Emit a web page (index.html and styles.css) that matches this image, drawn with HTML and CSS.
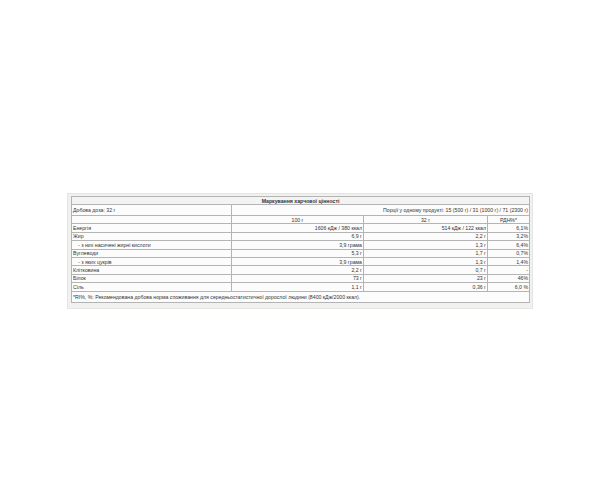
FILE: index.html
```html
<!DOCTYPE html>
<html lang="uk">
<head>
<meta charset="utf-8">
<link rel="stylesheet" href="styles.css">
</head>
<body>
<div class="wrap">
<table class="nut">
  <colgroup><col class="c1"><col class="c2"><col class="c3"><col class="c4"></colgroup>
  <tr class="t"><th colspan="4" class="title">Маркування харчової цінності</th></tr>
  <tr class="dose"><td class="l">Добова доза: 32 г</td><td colspan="3" class="r">Порції у одному продукті: 15 (500 г) / 31 (1000 г) / 71 (2300 г)</td></tr>
  <tr class="row"><td></td><td class="c">100 г</td><td class="c">32 г</td><td class="c">РДН%*</td></tr>
  <tr class="row"><td class="l">Енергія</td><td class="r">1606 кДж / 380 ккал</td><td class="r">514 кДж / 122 ккал</td><td class="r">6,1%</td></tr>
  <tr class="row"><td class="l">Жир</td><td class="r">6,9 г</td><td class="r">2,2 г</td><td class="r">3,2%</td></tr>
  <tr class="row"><td class="l sub">- з них насичені жирні кислоти</td><td class="r">3,9 грама</td><td class="r">1,3 г</td><td class="r">6,4%</td></tr>
  <tr class="row sep"><td class="l">Вуглеводи</td><td class="r">5,3 г</td><td class="r">1,7 г</td><td class="r">0,7%</td></tr>
  <tr class="row"><td class="l sub">- з яких цукрів</td><td class="r">3,9 грама</td><td class="r">1,3 г</td><td class="r">1,4%</td></tr>
  <tr class="row"><td class="l">Клітковина</td><td class="r">2,2 г</td><td class="r">0,7 г</td><td class="r">-</td></tr>
  <tr class="row"><td class="l">Білок</td><td class="r">73 г</td><td class="r">23 г</td><td class="r">46%</td></tr>
  <tr class="row"><td class="l">Сіль</td><td class="r">1,1 г</td><td class="r">0,36 г</td><td class="r">6,0 %</td></tr>
  <tr class="foot"><td colspan="4" class="l note">*RI%, %: Рекомендована добова норма споживання для середньостатистичної дорослої людини (8400 кДж/2000 ккал).</td></tr>
</table>
</div>
</body>
</html>
```
FILE: styles.css
```css
html, body {
  margin: 0;
  padding: 0;
  background: #ffffff;
}
body {
  font-family: "Liberation Sans", Arial, sans-serif;
  color: #333333;
}
.wrap {
  margin: 193px 0 0 67px;
  width: 466px;
  padding: 2px 3px 5px 3px;
  background: #f1f1ef;
  border: 1px solid #e4e4e2;
  box-sizing: border-box;
}
.nut {
  width: 458px;
  border-collapse: collapse;
  table-layout: fixed;
  background: #fcfcfc;
  border: 1px solid #9a9a9a;
  font-size: 5.2px;
  line-height: 6px;
}
.c1 { width: 160px; }
.c2 { width: 132px; }
.c3 { width: 124px; }
.c4 { width: 42px; }
.nut th, .nut td {
  border: 1px solid #b4b4b4;
  padding: 0 1px;
  white-space: nowrap;
  overflow: hidden;
  vertical-align: middle;
}
.t { height: 8px; }
.dose { height: 11px; }
.row { height: 8.4px; }
.foot { height: 11px; }
.title {
  font-weight: bold;
  text-align: center;
  background: #f3f3f3;
}
.l { text-align: left; }
.r { text-align: right; }
.c { text-align: center; }
.nut td.sub { padding-left: 6px; }
.sep td { border-top: 1px solid #8a8a8a; }
```
